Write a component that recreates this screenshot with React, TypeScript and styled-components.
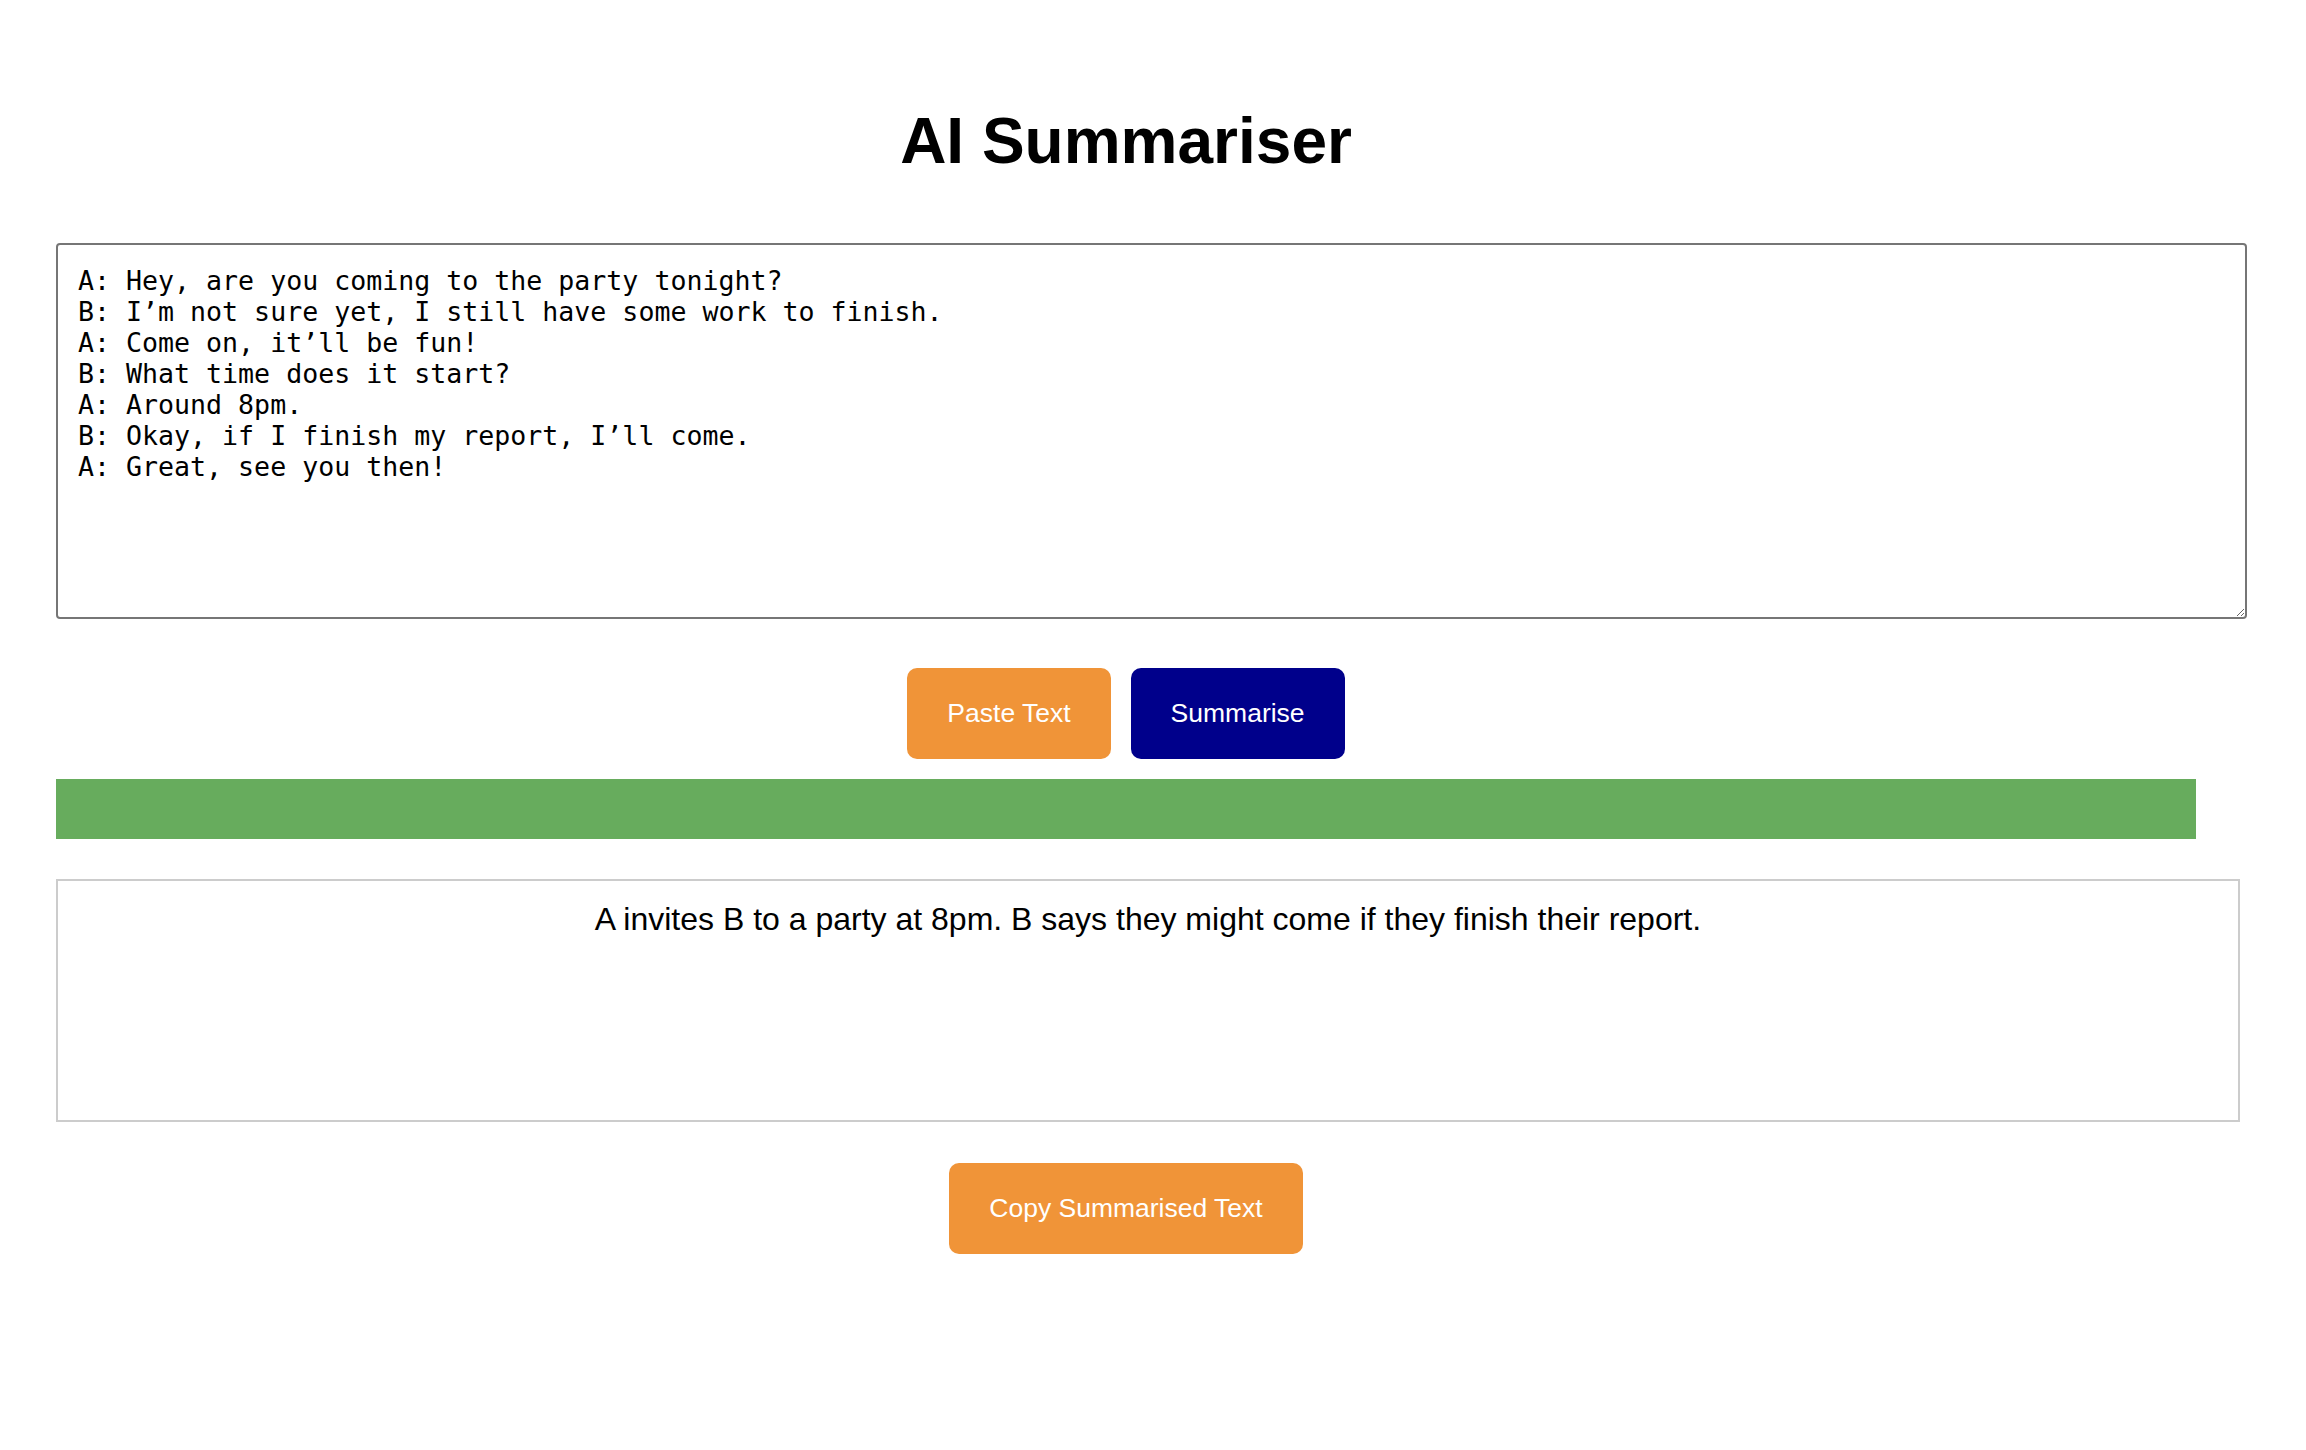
import styled, { createGlobalStyle } from "styled-components";

const GlobalStyle = createGlobalStyle`
  body {
    margin: 0;
    background: #fff;
    font-family: "Liberation Sans", Arial, sans-serif;
  }
`;

const Page = styled.div`
  width: 2140px;
  margin-left: 56px;
  padding-bottom: 120px;
  display: flex;
  flex-direction: column;
`;

const Title = styled.h1`
  margin: 104px 0 65px;
  font-size: 64px;
  line-height: 74px;
  font-weight: 700;
  text-align: center;
  color: #000;
`;

const InputArea = styled.textarea`
  box-sizing: border-box;
  width: calc(100% + 51px);
  height: 376px;
  padding: 20px;
  border: 2px solid #767676;
  border-radius: 4px;
  font-family: "DejaVu Sans Mono", monospace;
  font-size: 26.6px;
  color: #000;
  background: #fff;
  resize: vertical;
  outline: none;
`;

const ButtonRow = styled.div`
  display: flex;
  justify-content: center;
  gap: 20px;
  margin-top: 49px;
`;

const Button = styled.button<{ variant?: "orange" | "navy" }>`
  padding: 30px 40px;
  border: none;
  border-radius: 10px;
  font-family: "Liberation Sans", Arial, sans-serif;
  font-size: 26.5px;
  line-height: 31px;
  color: #fff;
  background-color: ${({ variant }) =>
    variant === "navy" ? "#00008b" : "#f09438"};
  cursor: pointer;
`;

const Progress = styled.div`
  width: 100%;
  height: 60px;
  margin-top: 20px;
  background: #67ac5d;
`;

const Output = styled.div`
  width: 100%;
  min-height: 199px;
  margin-top: 40px;
  padding: 20px;
  border: 2px solid #cccccc;
  font-size: 32px;
  line-height: 37px;
  text-align: center;
  color: #000;
`;

const CopyRow = styled.div`
  display: flex;
  justify-content: center;
  margin-top: 41px;
`;

const conversation = `A: Hey, are you coming to the party tonight?
B: I’m not sure yet, I still have some work to finish.
A: Come on, it’ll be fun!
B: What time does it start?
A: Around 8pm.
B: Okay, if I finish my report, I’ll come.
A: Great, see you then!`;

const App = () => {
  return (
    <>
      <GlobalStyle />
      <Page>
        <Title>AI Summariser</Title>
        <InputArea defaultValue={conversation} />
        <ButtonRow>
          <Button variant="orange">Paste Text</Button>
          <Button variant="navy">Summarise</Button>
        </ButtonRow>
        <Progress />
        <Output>
          A invites B to a party at 8pm. B says they might come if they finish
          their report.
        </Output>
        <CopyRow>
          <Button variant="orange">Copy Summarised Text</Button>
        </CopyRow>
      </Page>
    </>
  );
};

export default App;
